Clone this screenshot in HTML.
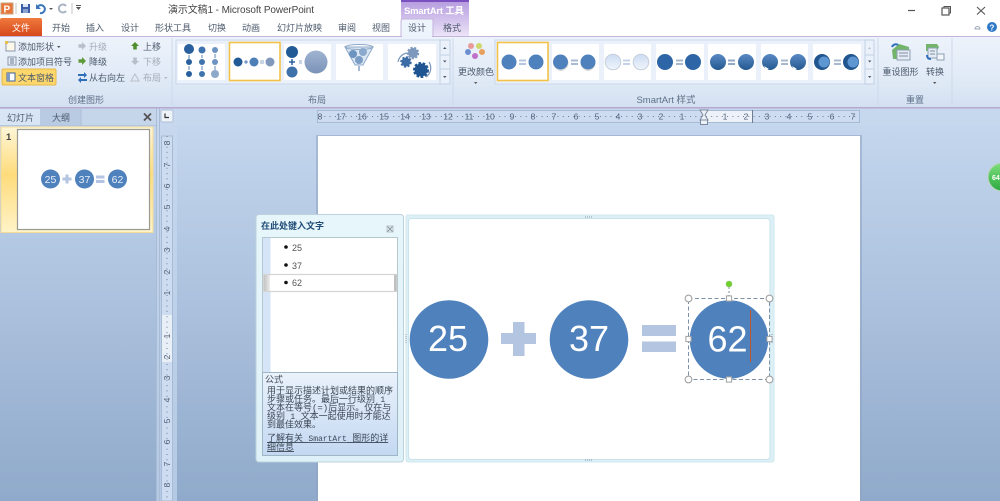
<!DOCTYPE html>
<html lang="zh"><head><meta charset="utf-8"><title>演示文稿1 - Microsoft PowerPoint</title>
<style>
html,body{margin:0;padding:0;background:#fff}
body{width:1000px;height:501px;overflow:hidden}
svg{display:block;filter:blur(.35px)}
text{font-family:"Liberation Sans","Noto Sans CJK SC",sans-serif;fill:#4a5568;font-size:9px}
.t{font-size:9px;fill:#4c5a6c}
.g{fill:#a3acb8}
.l{font-size:9px;fill:#5d6f88;text-anchor:middle}
.r{font-size:8.5px;fill:#4f5f76;text-anchor:middle}
.m{font-size:9px;fill:#3c4756;font-family:"Liberation Mono","Noto Sans CJK SC",monospace}
.m tspan{font-size:8px}
.big{font-size:36px;fill:#fff;text-anchor:middle}
.s{font-size:10.5px;fill:#e8eef7;text-anchor:middle}
</style></head><body>
<svg width="1000" height="501" viewBox="0 0 1000 501" xmlns="http://www.w3.org/2000/svg">
<defs>
<linearGradient id="rb" x1="0" y1="0" x2="0" y2="1"><stop offset="0" stop-color="#edf3fb"/><stop offset=".65" stop-color="#dfe9f6"/><stop offset="1" stop-color="#d3e0f1"/></linearGradient>
<linearGradient id="bg" x1="0" y1="0" x2="0" y2="1"><stop offset="0" stop-color="#c6d8ef"/><stop offset="1" stop-color="#90aacb"/></linearGradient>
<linearGradient id="band" x1="0" y1="0" x2="0" y2="1"><stop offset="0" stop-color="#c8d9ef"/><stop offset="1" stop-color="#b4c9e4"/></linearGradient>
<linearGradient id="file" x1="0" y1="0" x2="0" y2="1"><stop offset="0" stop-color="#f07a3e"/><stop offset="1" stop-color="#d5481a"/></linearGradient>
<linearGradient id="sa" x1="0" y1="0" x2="0" y2="1"><stop offset="0" stop-color="#b49ade"/><stop offset="1" stop-color="#ece4f8"/></linearGradient>
<linearGradient id="thumb" x1="0" y1="0" x2="0" y2="1"><stop offset="0" stop-color="#fff6d8"/><stop offset=".45" stop-color="#fedc7c"/><stop offset="1" stop-color="#fff3c8"/></linearGradient>
<linearGradient id="pane" x1="0" y1="0" x2="0" y2="1"><stop offset="0" stop-color="#e6f6fb"/><stop offset="1" stop-color="#dff1f8"/></linearGradient>
<linearGradient id="desc" x1="0" y1="0" x2="0" y2="1"><stop offset="0" stop-color="#eaf2fb"/><stop offset="1" stop-color="#c4d8f2"/></linearGradient>
<linearGradient id="ball" x1="0" y1="0" x2="0" y2="1"><stop offset="0" stop-color="#5a8ac6"/><stop offset="1" stop-color="#24588f"/></linearGradient>
<linearGradient id="pale" x1="0" y1="0" x2="0" y2="1"><stop offset="0" stop-color="#ccdcf3"/><stop offset="1" stop-color="#f0f5fc"/></linearGradient>
<linearGradient id="grey" x1="0" y1="0" x2="0" y2="1"><stop offset="0" stop-color="#a0b4d2"/><stop offset="1" stop-color="#7b93b8"/></linearGradient>
<linearGradient id="green" x1="0" y1="0" x2="0" y2="1"><stop offset="0" stop-color="#7fe07c"/><stop offset="1" stop-color="#2aa840"/></linearGradient>
<linearGradient id="bar" x1="0" y1="0" x2="1" y2="0"><stop offset="0" stop-color="#bcbcbc"/><stop offset="1" stop-color="#ececec"/></linearGradient>
<g id="h"><circle r="3.4" fill="#fff" stroke="#9a9a9a"/></g>
<g id="hs"><rect x="-2.6" y="-2.6" width="5.2" height="5.2" fill="#fff" stroke="#a0a0a0"/></g>
<g id="up"><path d="M0-4 4 0H1.8V3.5H-1.8V0H-4Z"/></g>
</defs>

<!-- title bar -->
<rect width="1000" height="36" fill="#fff"/>
<rect x="1" y="3" width="12" height="11" fill="#e8763a" stroke="#c9a27a"/>
<text x="3.5" y="12.5" style="font-size:10px;font-weight:bold;fill:#fff">P</text>
<line x1="16" y1="3" x2="16" y2="14" stroke="#c4c4c4"/>
<rect x="21" y="4" width="9" height="9" fill="#3d5fa8"/><rect x="23" y="4" width="5" height="3" fill="#dfe7f5"/><rect x="23" y="9" width="5" height="4" fill="#8aa2cf"/>
<path d="M37 8a4 4 0 1 1 3 5" fill="none" stroke="#3b75ba" stroke-width="2"/><path d="M36 4v5h5z" fill="#3b75ba"/>
<path d="M49 8h4l-2 2z" fill="#555"/>
<path d="M66 6a4 4 0 1 0 0 5" fill="none" stroke="#a9b3c2" stroke-width="2"/>
<line x1="72" y1="3" x2="72" y2="14" stroke="#c4c4c4"/>
<path d="M76 7h5l-2.500 3z" fill="#555"/><rect x="76" y="5" width="5" height="1" fill="#555"/>
<text x="168" y="13" textLength="146" style="font-size:10px;fill:#444">演示文稿1 - Microsoft PowerPoint</text>
<!-- window controls -->
<line x1="908" y1="10.500" x2="915" y2="10.500" stroke="#555" stroke-width="1.200"/>
<rect x="942" y="8" width="7" height="7" fill="none" stroke="#555" stroke-width="1.200"/><path d="M944 8V6.500H950.500V13H949" fill="none" stroke="#555"/>
<path d="M977 7 985 14.500M985 7 977 14.500" stroke="#555" stroke-width="1.100"/>
<path d="M975 29a2.500 2.500 0 0 1 5 0z" fill="none" stroke="#9aa5b4"/>
<circle cx="992" cy="27" r="5" fill="#2f78c8"/><text x="992" y="30.500" style="font-size:8px;font-weight:bold;fill:#fff;text-anchor:middle">?</text>

<!-- contextual SmartArt -->
<rect x="401" y="0" width="68" height="36" fill="url(#sa)"/>
<rect x="401" y="0" width="68" height="2" fill="#7a4fc0"/>
<text x="404" y="14" textLength="60" style="font-size:9.500px;fill:#fff;font-weight:bold">SmartArt 工具</text>

<!-- tabs -->
<path d="M0 36V20Q0 18 2 18H40Q42 18 42 20V36Z" fill="url(#file)"/>
<text x="12" y="31" style="font-size:9px;fill:#fff">文件</text>
<text x="52" y="31" class="t">开始</text><text x="86" y="31" class="t">插入</text><text x="121" y="31" class="t">设计</text>
<text x="155" y="31" class="t">形状工具</text><text x="208" y="31" class="t">切换</text><text x="242" y="31" class="t">动画</text>
<text x="277" y="31" class="t">幻灯片放映</text><text x="338" y="31" class="t">审阅</text><text x="372" y="31" class="t">视图</text>
<text x="443" y="31" class="t">格式</text>

<!-- ribbon -->
<rect x="0" y="36" width="1000" height="71" fill="url(#rb)"/>
<line x1="0" y1="36.500" x2="1000" y2="36.500" stroke="#c4b4dc"/>
<path d="M401 36V21Q401 19 403 19H431Q433 19 433 21V36" fill="#eef4fb" stroke="#c4b4dc"/>
<rect x="402" y="35" width="30" height="3" fill="#edf3fb"/>
<text x="408" y="31" class="t">设计</text>
<rect x="0" y="107" width="1000" height="1.500" fill="#b8a8d0"/>
<g stroke="#cdd9ea"><line x1="172" y1="38" x2="172" y2="106"/><line x1="453" y1="38" x2="453" y2="106"/><line x1="878" y1="38" x2="878" y2="106"/><line x1="952" y1="38" x2="952" y2="106"/></g>

<!-- create graphic group -->
<rect x="6" y="42" width="9" height="9" fill="#fdf8e8" stroke="#8a98ac"/><rect x="5" y="41" width="3" height="3" fill="#e8c050"/>
<text x="18" y="50" class="t">添加形状</text><path d="M57 46h3.500l-1.700 2z" fill="#555"/>
<rect x="8" y="57" width="8" height="8" fill="#e6edf6" stroke="#8a98ac"/><path d="M10 59h4M10 61h4M10 63h4" stroke="#6a7a90"/>
<text x="18" y="65" class="t">添加项目符号</text>
<rect x="2" y="69" width="54" height="16" rx="1.500" fill="#fdd76c" stroke="#e8b84a"/>
<rect x="7" y="73" width="8" height="8" fill="#fff" stroke="#3d5f96"/><rect x="7" y="73" width="3" height="8" fill="#7b9ac8"/>
<text x="18" y="81" class="t">文本窗格</text>
<use href="#up" x="82" y="46" transform="rotate(90 82 46)" fill="#b6bfca"/><text x="89" y="50" class="t g">升级</text>
<use href="#up" x="82" y="61" transform="rotate(90 82 61)" fill="#5f9a3a"/><text x="89" y="65" class="t">降级</text>
<path d="M78 74h6v-2l3 3-3 3v-2h-6zM87 81h-6v2l-3-3 3-3v2h6z" fill="#2e6db8"/>
<text x="89" y="81" class="t">从右向左</text>
<use href="#up" x="135" y="46" fill="#4f8f2f"/><text x="143" y="50" class="t">上移</text>
<use href="#up" x="135" y="61" transform="rotate(180 135 61)" fill="#b6bfca"/><text x="143" y="65" class="t g">下移</text>
<path d="M131 81l4-7 4 7zM131 81h8" fill="none" stroke="#b8bfc9"/><text x="143" y="81" class="t g">布局</text><path d="M164 77h3.500l-1.700 2z" fill="#b0b6c0"/>
<text x="86" y="103" class="l">创建图形</text>
<text x="317" y="103" class="l">布局</text>
<text x="666" y="103" class="l" style="font-size:9.500px">SmartArt 样式</text>
<text x="915" y="103" class="l">重置</text>

<!-- layout gallery -->
<rect x="176" y="40" width="274" height="44" fill="#eaf1fa" stroke="#c9d7ea"/>
<g fill="#fff">
<rect x="178" y="44" width="47" height="36"/><rect x="284" y="44" width="47" height="36"/><rect x="336" y="44" width="47" height="36"/><rect x="388" y="44" width="48" height="36"/>
</g>
<rect x="229.500" y="42.500" width="50.500" height="38" fill="#fff" stroke="#f2c346" stroke-width="1.600"/>
<!-- layout 1 -->
<g fill="#2a5f9e">
<circle cx="189" cy="49" r="5"/><circle cx="189" cy="62" r="3"/><circle cx="189" cy="74" r="3"/>
<circle cx="202" cy="50" r="3.500" fill="#3f73ad"/><circle cx="202" cy="62" r="3" fill="#3f73ad"/><circle cx="202" cy="74" r="3" fill="#3f73ad"/>
<circle cx="215" cy="50" r="3" fill="#6c93c2"/><circle cx="215" cy="62" r="3" fill="#6c93c2"/><circle cx="215" cy="74" r="4" fill="#8ea8ca"/>
<path d="M189 55v4M189 66v4M202 55v3M202 66v4M215 54v4M215 66v4" stroke="#5c85b6" fill="none"/>
</g>
<!-- layout 2 -->
<circle cx="238" cy="62" r="4.500" fill="#225a96"/><path d="M244 62h4M246 60v4" stroke="#4a7bb4"/><circle cx="254" cy="62" r="4.500" fill="#4d7fb7"/><path d="M260 61h4M260 63h4" stroke="#8ea8ca"/><circle cx="270" cy="62" r="4.500" fill="#8099bc"/>
<!-- layout 3 -->
<circle cx="292" cy="52" r="6" fill="#225a96"/><circle cx="292" cy="72" r="5.500" fill="#3e70aa"/><path d="M289 62h6M292 59v6" stroke="#2a5f9e" stroke-width="1.500"/><path d="M299 61h3M299 63h3" stroke="#8ea8ca"/><circle cx="316" cy="62" r="11.500" fill="url(#grey)"/>
<!-- layout 4 funnel -->
<path d="M345 47h28l-10 18h-8z" fill="#dbe6f3" stroke="#8faac9"/><ellipse cx="359" cy="47" rx="14" ry="2.500" fill="none" stroke="#8faac9"/><circle cx="353" cy="54" r="4" fill="#6d93c0"/><circle cx="363" cy="52" r="4" fill="#8aa9cd"/><circle cx="359" cy="60" r="4" fill="#7b9dc5"/><path d="M359 66v5" stroke="#a4b8d3" stroke-width="2"/>
<!-- layout 5 gears -->
<circle cx="413" cy="53" r="5" fill="#7c98bc" stroke="#7c98bc" stroke-width="2.500" stroke-dasharray="2 1.500"/>
<circle cx="406" cy="62" r="4.500" fill="#3b6ca6" stroke="#3b6ca6" stroke-width="2.500" stroke-dasharray="2 1.500"/>
<circle cx="421" cy="70" r="6.500" fill="#1f5590" stroke="#1f5590" stroke-width="3" stroke-dasharray="2.500 1.500"/>
<path d="M429 62a11 11 0 0 1-3 15M398 62a11 11 0 0 1 9-9" fill="none" stroke="#7996ba" stroke-width="1.200"/>
<!-- layout scroll -->
<g fill="#eaf1fa" stroke="#c2d1e5"><rect x="440" y="40" width="10" height="15"/><rect x="440" y="55" width="10" height="14"/><rect x="440" y="69" width="10" height="15"/></g>
<path d="M443 49l1.800-2 1.800 2zM443 60.500l1.800 2 1.800-2zM443 76h3.600l-1.800 2z" fill="#4a5a70"/>

<!-- change colour -->
<circle cx="471" cy="46" r="3" fill="#e89a98"/><circle cx="479" cy="46" r="3" fill="#cfd86c"/><circle cx="482" cy="52" r="3" fill="#e8a060"/><circle cx="468" cy="52" r="3" fill="#6c8ed0"/><circle cx="475" cy="56" r="3" fill="#c070c8"/>
<text x="476" y="75" class="t" style="text-anchor:middle">更改颜色</text><path d="M474 82h3.400l-1.700 2z" fill="#555"/>

<!-- style gallery -->
<rect x="495" y="40" width="379" height="44" fill="#eaf1fa" stroke="#c9d7ea"/>
<g fill="#fff"><rect x="552" y="44" width="47" height="36"/><rect x="604" y="44" width="47" height="36"/><rect x="656" y="44" width="48" height="36"/><rect x="708" y="44" width="48" height="36"/><rect x="761" y="44" width="47" height="36"/><rect x="813" y="44" width="48" height="36"/></g>
<rect x="497.500" y="42.500" width="50.500" height="38" fill="#fff" stroke="#f2c346" stroke-width="1.600"/>
<g fill="#4f81bd">
<circle cx="509" cy="62" r="7.500"/><circle cx="536" cy="62" r="7.500"/><path d="M519 59.500h7v2h-7zM519 63h7v2h-7z" fill="#b5c6de"/>
<ellipse cx="561" cy="63" rx="7.500" ry="8" fill="#ddd"/><ellipse cx="588" cy="63" rx="7.500" ry="8" fill="#ddd"/><circle cx="560.500" cy="62" r="7.500"/><circle cx="588" cy="62" r="7.500"/><path d="M571 59.500h7v2h-7zM571 63h7v2h-7z" fill="#a8bad4"/>
<circle cx="613" cy="62" r="7.800" fill="url(#pale)" stroke="#c6cfdb"/><circle cx="641" cy="62" r="7.800" fill="url(#pale)" stroke="#c6cfdb"/><path d="M623 59.500h7v2h-7zM623 63h7v2h-7z" fill="#c4d3e8"/>
<circle cx="665" cy="62" r="8" fill="#2e65a6"/><circle cx="693" cy="62" r="8" fill="#2e65a6"/><path d="M676 59.500h7v2h-7zM676 63h7v2h-7z" fill="#a8b8cf"/>
<circle cx="718" cy="62" r="8" fill="url(#ball)"/><circle cx="746" cy="62" r="8" fill="url(#ball)"/><path d="M728 59.500h7v2h-7zM728 63h7v2h-7z" fill="#93a8c6"/>
<circle cx="770" cy="62" r="8" fill="url(#ball)"/><circle cx="798" cy="62" r="8" fill="url(#ball)"/><path d="M764 66l5 3-3 1zM792 66l5 3-3 1z" fill="#fff"/><path d="M781 59.500h7v2h-7zM781 63h7v2h-7z" fill="#a8b8cf"/>
<circle cx="822" cy="62" r="8" fill="#20558f"/><circle cx="851" cy="62" r="8" fill="#20558f"/><circle cx="824" cy="62" r="5.500" fill="#5e96d2"/><circle cx="853" cy="62" r="5.500" fill="#5e96d2"/><path d="M834 59.500h7v2h-7zM834 63h7v2h-7z" fill="#a8b8cf"/>
</g>
<g fill="#eaf1fa" stroke="#c2d1e5"><rect x="865" y="40" width="9" height="15"/><rect x="865" y="55" width="9" height="14"/><rect x="865" y="69" width="9" height="15"/></g>
<path d="M868 49l1.500-2 1.500 2z" fill="#b8c2ce"/><path d="M868 60.500l1.700 2 1.700-2zM868 76h3.400l-1.700 2z" fill="#4a5a70"/>

<!-- reset/convert -->
<path d="M892 50l7-6 10 3v12h-16z" fill="#72b56a"/><rect x="897" y="50" width="13" height="10" fill="#e5ebf3" stroke="#8ea0b6"/><path d="M899 53h9M899 56h9" stroke="#7d8ea6"/>
<path d="M892 47a4 4 0 0 1 6-2" fill="none" stroke="#2f6fbd" stroke-width="2"/>
<text x="900.500" y="75" class="t" style="text-anchor:middle">重设图形</text>
<path d="M926 44h11l2 3-2 4h-11z" fill="#72b56a"/><rect x="928" y="48" width="9" height="10" fill="#e5ebf3" stroke="#8ea0b6"/><path d="M930 51h5M930 54h5" stroke="#7d8ea6"/>
<path d="M927 55q0 4 4 4" fill="none" stroke="#2f6fbd" stroke-width="2"/><rect x="937" y="54" width="7" height="6" fill="#f3f6fa" stroke="#8ea0b6"/>
<text x="935" y="75" class="t" style="text-anchor:middle">转换</text><path d="M933 82h3.400l-1.700 2z" fill="#555"/>

<!-- work area -->
<rect x="0" y="108.500" width="1000" height="392.500" fill="url(#bg)"/>
<rect x="157" y="108.500" width="843" height="17" fill="#c6d8ee"/>

<!-- left pane -->
<rect x="0" y="108.500" width="156" height="17" fill="#c5d6eb"/>
<rect x="40" y="109" width="41" height="16" fill="#b8cbe3"/>
<path d="M0 125V109H40V125Z" fill="#d7e5f5"/>
<line x1="81" y1="109" x2="81" y2="125" stroke="#aebfd6"/>
<text x="7" y="121" class="t">幻灯片</text><text x="52" y="121" class="t">大纲</text>
<path d="M144 113.500l7 7M151 113.500l-7 7" stroke="#555" stroke-width="1.800"/>
<rect x="0" y="125" width="156" height="1" fill="#b4c6de"/>
<rect x="1" y="127" width="152" height="105.500" fill="url(#thumb)" stroke="#f3dc9a"/>
<text x="6" y="140" style="font-size:9.500px;font-weight:bold;fill:#444">1</text>
<rect x="17.500" y="129.500" width="132" height="100" fill="#fff" stroke="#9a9a94" stroke-width="1.200"/>
<circle cx="50.500" cy="179" r="9.500" fill="#4f81bd"/><circle cx="84.500" cy="179" r="9.500" fill="#4f81bd"/><circle cx="117.500" cy="179" r="9.500" fill="#4f81bd"/>
<text x="50.500" y="183" class="s">25</text><text x="84.500" y="183" class="s">37</text><text x="117.500" y="183" class="s">62</text>
<path d="M62.500 177.500h3v-3h3v3h3v3h-3v3h-3v-3h-3z" fill="#b4c5e1"/>
<path d="M96 175.500h8.500v3h-8.500zM96 180h8.500v3h-8.500z" fill="#b4c5e1"/>

<!-- splitter + ruler band -->
<rect x="156" y="108.500" width="21" height="392.500" fill="url(#band)"/>
<rect x="156" y="108.500" width="1" height="392.500" fill="#a9bcd6"/>
<rect x="159" y="108.500" width="1" height="392.500" fill="#a9bcd6"/>

<!-- ruler corner -->
<rect x="161" y="110" width="12" height="12" rx="1" fill="#eef3fa" stroke="#aebfd6"/><path d="M165 113.500v4h4" fill="none" stroke="#333" stroke-width="1.200"/>

<!-- horizontal ruler -->
<rect x="317.500" y="110.500" width="542" height="12" fill="#cddcf0" stroke="#a8bbd4"/>
<rect x="704" y="111" width="48" height="11" fill="#edf2f9"/>
<line x1="752.500" y1="110" x2="752.500" y2="123" stroke="#6d7c90"/>
<line x1="317" y1="116.500" x2="859" y2="116.500" stroke="#6d7d93" stroke-width="1" stroke-dasharray="1 4.300" stroke-dashoffset="-2"/>
<g>
<text class="r" x="320" y="119.500">8</text><text class="r" x="341" y="119.500">17</text><text class="r" x="362" y="119.500">16</text><text class="r" x="384" y="119.500">15</text><text class="r" x="405" y="119.500">14</text><text class="r" x="426" y="119.500">13</text><text class="r" x="448" y="119.500">12</text><text class="r" x="469" y="119.500">11</text><text class="r" x="490" y="119.500">10</text>
<text class="r" x="512" y="119.500">9</text><text class="r" x="533" y="119.500">8</text><text class="r" x="554" y="119.500">7</text><text class="r" x="576" y="119.500">6</text><text class="r" x="597" y="119.500">5</text><text class="r" x="618" y="119.500">4</text><text class="r" x="640" y="119.500">3</text><text class="r" x="661" y="119.500">2</text><text class="r" x="682" y="119.500">1</text>
<text class="r" x="725" y="119.500">1</text><text class="r" x="746" y="119.500">2</text><text class="r" x="767" y="119.500">3</text><text class="r" x="789" y="119.500">4</text><text class="r" x="810" y="119.500">5</text><text class="r" x="832" y="119.500">6</text><text class="r" x="853" y="119.500">7</text>
</g>
<path d="M700 110h8l-3 5 3 5h-8l3-5z" fill="#eef2f8" stroke="#7c8a9e"/><rect x="700.500" y="120" width="7" height="4.500" fill="#eef2f8" stroke="#7c8a9e"/>

<!-- vertical ruler -->
<rect x="161.500" y="136" width="11" height="365" fill="#cddcf0" stroke="#a8bbd4"/>
<rect x="162" y="315" width="10" height="47" fill="#e9eff7"/>
<line x1="167" y1="136" x2="167" y2="501" stroke="#6d7d93" stroke-dasharray="1 4.300"/>
<g>
<text class="r" transform="translate(170 143) rotate(-90)">8</text><text class="r" transform="translate(170 165) rotate(-90)">7</text><text class="r" transform="translate(170 186) rotate(-90)">6</text><text class="r" transform="translate(170 207) rotate(-90)">5</text><text class="r" transform="translate(170 229) rotate(-90)">4</text><text class="r" transform="translate(170 250) rotate(-90)">3</text><text class="r" transform="translate(170 272) rotate(-90)">2</text><text class="r" transform="translate(170 293) rotate(-90)">1</text>
<text class="r" transform="translate(170 336) rotate(-90)">1</text><text class="r" transform="translate(170 357) rotate(-90)">2</text><text class="r" transform="translate(170 378) rotate(-90)">3</text><text class="r" transform="translate(170 400) rotate(-90)">4</text><text class="r" transform="translate(170 421) rotate(-90)">5</text><text class="r" transform="translate(170 442) rotate(-90)">6</text><text class="r" transform="translate(170 464) rotate(-90)">7</text><text class="r" transform="translate(170 485) rotate(-90)">8</text>
</g>

<!-- slide -->
<rect x="316" y="135" width="546" height="366" fill="#8ea3c2" opacity=".55"/>
<rect x="318" y="136" width="542" height="365" fill="#fff"/>

<!-- green floating -->
<circle cx="1002" cy="177" r="14" fill="url(#green)" stroke="#bcd3c0" stroke-width="1.200"/>
<text x="992" y="180" style="font-size:7px;font-weight:bold;fill:#fff">64</text>

<!-- diagram frame -->
<rect x="406" y="215" width="368" height="247" rx="2" fill="#dcf0f6" stroke="#cfe8ef"/>
<rect x="408.500" y="218.500" width="361.500" height="241" rx="3" fill="#fff" stroke="#c7e3ec"/>
<path d="M585 217h8M585 460h8" stroke="#8a9aaa" stroke-dasharray="1 1"/>
<path d="M406 334v9M772 334v9" stroke="#8a9aaa" stroke-dasharray="1 1"/>

<circle cx="449" cy="339.500" r="39.300" fill="#4f81bd"/>
<circle cx="589" cy="339.500" r="39.300" fill="#4f81bd"/>
<circle cx="729" cy="339.500" r="39.300" fill="#4f81bd"/>
<text x="448" y="351" class="big">25</text><text x="589" y="351" class="big">37</text><text x="727.500" y="351.500" class="big">62</text>
<path d="M501 333h12v-11h11.500v11h11.500v11h-11.500v12h-11.500v-12h-12z" fill="#b4c5e1"/>
<path d="M642 325h34v11h-34zM642 341.500h34v10.500h-34z" fill="#b4c5e1"/>
<line x1="750.500" y1="310" x2="750.500" y2="362" stroke="#c0562c" stroke-width="1"/>

<!-- selection -->
<rect x="688.500" y="298.500" width="81" height="81" fill="none" stroke="#7e90a6" stroke-dasharray="4 2.500"/>
<line x1="729" y1="287" x2="729" y2="298" stroke="#7e90a6" stroke-dasharray="2 2"/>
<circle cx="729" cy="284" r="3" fill="#6fd02c" stroke="#8fc86a" stroke-width=".6"/>
<use href="#h" x="688.500" y="298.500"/><use href="#h" x="769.500" y="298.500"/><use href="#h" x="688.500" y="379.500"/><use href="#h" x="769.500" y="379.500"/>
<use href="#hs" x="729" y="298.500"/><use href="#hs" x="729" y="379.500"/><use href="#hs" x="688.500" y="339"/><use href="#hs" x="769.500" y="339"/>

<!-- text pane -->
<rect x="256" y="214.500" width="147.500" height="247.500" rx="3" fill="url(#pane)" stroke="#bcd2dc"/>
<text x="261" y="229" style="font-size:9px;font-weight:bold;fill:#1f4a76">在此处键入文字</text>
<path d="M387.500 226.500l5 5M392.500 226.500l-5 5" stroke="#8a949e" stroke-width="1"/><rect x="387" y="226" width="6" height="6" fill="none" stroke="#9aa3ac" stroke-width=".6"/>
<rect x="262.500" y="237.500" width="135" height="135" fill="#fff" stroke="#b5c8cf"/>
<rect x="263" y="238" width="7.500" height="134" fill="#d6e4f7"/>
<rect x="263" y="274" width="134" height="18" fill="#fff"/>
<rect x="263" y="274" width="7" height="18" fill="url(#bar)"/>
<rect x="263.500" y="274.500" width="133" height="17" fill="none" stroke="#d4d4d4" stroke-width="1.200"/>
<rect x="394" y="275" width="2.500" height="16" fill="#c0c0c0"/>
<circle cx="286" cy="247" r="1.800" fill="#111"/><circle cx="286" cy="265" r="1.800" fill="#111"/><circle cx="286" cy="282.500" r="1.800" fill="#111"/>
<text x="292" y="251" style="font-size:9px;fill:#555">25</text><text x="292" y="269" style="font-size:9px;fill:#555">37</text><text x="292" y="286" style="font-size:9px;fill:#555">62</text>
<rect x="262.500" y="372.500" width="135" height="83" fill="url(#desc)" stroke="#9fb6c6"/>
<text x="265" y="382.500" class="m">公式</text>
<text x="267" y="393.500" class="m">用于显示描述计划或结果的顺序</text>
<text x="267" y="402" class="m">步骤或任务。最后一行级别 <tspan>1</tspan></text>
<text x="267" y="410.500" class="m">文本在等号(=)后显示。仅在与</text>
<text x="267" y="419" class="m">级别 <tspan>1</tspan> 文本一起使用时才能达</text>
<text x="267" y="427.500" class="m">到最佳效果。</text>
<text x="267" y="441" class="m" text-decoration="underline">了解有关 <tspan>SmartArt</tspan> 图形的详</text>
<text x="267" y="450" class="m" text-decoration="underline">细信息</text>
</svg>
</body></html>
